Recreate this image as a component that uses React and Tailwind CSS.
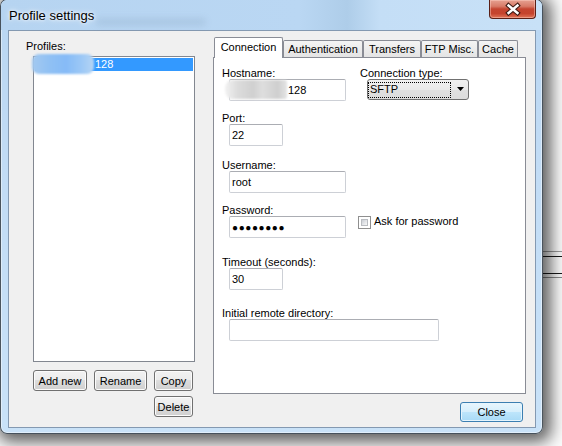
import React from "react";

function Btn({ className, children }) {
  return (
    <div
      className={
        "h-[21px] rounded-[3px] border border-[#707070] bg-[linear-gradient(to_bottom,#f2f2f2_0%,#ebebeb_50%,#dddddd_50%,#cfcfcf_100%)] shadow-[inset_0_0_0_1px_#fbfbfb] flex items-center justify-center " +
        className
      }
    >
      {children}
    </div>
  );
}

function TextBox({ className, children }) {
  return (
    <div
      className={
        "h-[22px] rounded-[2px] border border-[#cdd0d6] border-t-[#abadb3] bg-white flex items-center pl-[2px] leading-[13px] " +
        className
      }
    >
      {children}
    </div>
  );
}

export default function App() {
  return (
    <div className="relative w-[562px] h-[446px] overflow-hidden bg-[#fbfbfb] [font-family:'Liberation_Sans',Arial,sans-serif] text-[11px] leading-[12px] text-black">
      {/* background application lines visible at the right */}
      <div className="absolute left-[520px] top-[251px] w-[42px] h-px bg-[#9a9a9a]" />
      <div className="absolute left-[520px] top-[256px] w-[42px] h-px bg-[#1a1a1a]" />
      <div className="absolute left-[520px] top-[273px] w-[42px] h-px bg-[#1a1a1a]" />
      <div className="absolute left-[520px] top-[277px] w-[42px] h-px bg-[#8a8a8a]" />

      {/* window */}
      <div className="absolute left-0 top-[-1px] w-[543px] h-[435px] rounded-[7px] border border-[rgba(0,0,0,0.62)] bg-[linear-gradient(to_bottom,#b9d6f2_0%,#c2dcf5_40%,#c9e2f8_100%)] shadow-[3px_3px_16px_5px_rgba(0,0,0,0.62),inset_0_0_0_1px_rgba(255,255,255,0.45)] flex flex-col">
        {/* title bar */}
        <div className="relative h-[30px] flex justify-between rounded-t-[6px] bg-[linear-gradient(to_right,#b6d4f1_0%,#bad7f3_55%,#aecde9_64%,#c4def6_70%,#c8e1f7_100%)]">
          <div className="absolute left-[95px] top-[18px] w-[110px] h-[8px] rounded-full bg-[rgba(90,120,150,0.14)] blur-[3px]" />
          <div className="relative pl-[8px] pt-[8px] text-[13px] leading-[16px] [text-shadow:0_0_6px_#ffffff,0_0_3px_#ffffff]">
            Profile settings
          </div>
          <div className="relative mr-[6px] w-[47px] h-[19px] rounded-b-[4px] border border-t-0 border-[#5a1f16] bg-[linear-gradient(to_bottom,#e6a191_0%,#d87b68_35%,#c4442f_50%,#c5432d_75%,#e07458_100%)] shadow-[inset_0_0_0_1px_rgba(255,210,200,0.45)]">
            <svg width="45" height="19" className="absolute left-0 top-0">
              <path d="M18.5 5.5 L27.5 13 M27.5 5.5 L18.5 13" stroke="#3d1a14" strokeWidth="4.6" strokeLinecap="square" fill="none" />
              <path d="M18.5 5.5 L27.5 13 M27.5 5.5 L18.5 13" stroke="#ffffff" strokeWidth="2.4" strokeLinecap="square" fill="none" />
            </svg>
          </div>
        </div>

        {/* client area */}
        <div className="ml-[7px] mr-[6px] mb-[5px] flex-1 border border-[#8499b1] bg-[#f0f0f0] flex">
          {/* left column */}
          <div className="w-[186px] shrink-0 pl-[17px] pt-[9px] flex flex-col">
            <div>Profiles:</div>
            <div className="relative mt-[4px] ml-[7px] w-[162px] h-[306px] border border-[#828790] bg-white p-px">
              <div className="h-[13px] bg-[#3399ff] text-white pl-[60px] leading-[13px]">128</div>
              <div className="absolute left-[-2px] top-[-3px] w-[62px] h-[20px] rounded-[7px] bg-[linear-gradient(to_right,#a3c9f0_0%,#8fc0f4_30%,#86bbf7_55%,#9cc8f6_80%,#b5d5f4_100%)] blur-[1px]" />
            </div>
            <div className="mt-[8px] ml-[7px] flex gap-[7px]">
              <Btn className="w-[54px]">Add new</Btn>
              <Btn className="w-[53px]">Rename</Btn>
              <Btn className="w-[39px]">Copy</Btn>
            </div>
            <div className="mt-[5px] ml-[128px]">
              <Btn className="w-[39px]">Delete</Btn>
            </div>
          </div>

          {/* right column */}
          <div className="ml-[18px] pt-[6px] w-[313px] flex flex-col">
            <div className="flex items-end h-[20px] pl-px">
              <div className="relative z-10 -mb-px h-[21px] w-[69px] border border-b-0 border-[#898c95] bg-white rounded-t-[2px] flex justify-center pt-[3px]">
                Connection
              </div>
              <div className="h-[17px] w-[80px] border border-b-0 border-[#898c95] bg-[linear-gradient(to_bottom,#f4f4f4,#e4e4e4)] rounded-t-[2px] flex justify-center pt-[2px]">
                Authentication
              </div>
              <div className="h-[17px] w-[58px] border border-b-0 border-[#898c95] bg-[linear-gradient(to_bottom,#f4f4f4,#e4e4e4)] rounded-t-[2px] flex justify-center pt-[2px]">
                Transfers
              </div>
              <div className="h-[17px] w-[57px] border border-b-0 border-[#898c95] bg-[linear-gradient(to_bottom,#f4f4f4,#e4e4e4)] rounded-t-[2px] flex justify-center pt-[2px]">
                FTP Misc.
              </div>
              <div className="h-[17px] w-[40px] border border-b-0 border-[#898c95] bg-[linear-gradient(to_bottom,#f4f4f4,#e4e4e4)] rounded-t-[2px] flex justify-center pt-[2px]">
                Cache
              </div>
            </div>

            <div className="h-[337px] border border-[#898c95] bg-white pl-[8px] pt-[9px] flex flex-col">
              {/* hostname / connection type */}
              <div className="flex">
                <div className="w-[138px]">
                  <div>Hostname:</div>
                  <div className="relative ml-[7px] w-[117px]">
                    <TextBox className="w-[117px] pl-[58px]">128</TextBox>
                    <div className="absolute left-[-4px] top-[1px] w-[62px] h-[19px] rounded-l-[8px] rounded-r-[2px] bg-[linear-gradient(to_right,#f2f2f2_0%,#dcdcdc_20%,#d0d0d0_45%,#dedede_60%,#cfcfcf_85%,#e4e4e4_100%)] blur-[1px]" />
                  </div>
                </div>
                <div>
                  <div>Connection type:</div>
                  <div className="ml-[7px] w-[102px] h-[21px] rounded-[3px] border border-[#707070] bg-[linear-gradient(to_bottom,#f0f0f0_0%,#e9e9e9_50%,#e0e0e0_50%,#dcdcdc_100%)] flex items-center">
                    <div className="w-[83px] h-[16px] border border-dotted border-black flex items-center pl-px leading-[13px]">
                      SFTP
                    </div>
                    <svg width="9" height="5" className="ml-[6px]">
                      <path d="M0 0 H7 L3.5 4 Z" fill="#000" />
                    </svg>
                  </div>
                </div>
              </div>

              {/* port */}
              <div className="mt-[11px]">Port:</div>
              <TextBox className="ml-[7px] w-[54px]">22</TextBox>

              {/* username */}
              <div className="mt-[13px]">Username:</div>
              <TextBox className="ml-[7px] w-[117px] border-[#8fbbe6] border-t-[#6fa4da]">root</TextBox>

              {/* password */}
              <div className="mt-[11px]">Password:</div>
              <div className="flex items-start">
                <TextBox className="ml-[7px] w-[117px] tracking-[0.6px] text-[10px]">●●●●●●●●</TextBox>
                <div className="ml-[12px] w-[13px] h-[13px] border border-[#8f8f8f] bg-white p-[2px]">
                  <div className="w-full h-full bg-[linear-gradient(135deg,#c9cdd3_0%,#e6e8eb_60%,#f7f7f7_100%)] border border-[#b9bcc1]" />
                </div>
                <div className="ml-[3px] -mt-px leading-[13px]">Ask for password</div>
              </div>

              {/* timeout */}
              <div className="mt-[18px]">Timeout (seconds):</div>
              <TextBox className="ml-[7px] w-[54px]">30</TextBox>

              {/* initial remote directory */}
              <div className="mt-[17px]">Initial remote directory:</div>
              <TextBox className="ml-[7px] w-[210px]"></TextBox>
            </div>

            <div className="mt-[8px] self-end mr-[3px] w-[63px] h-[20px] rounded-[3px] border border-[#3c7fb1] bg-[linear-gradient(to_bottom,#e8f6fd_0%,#d6effc_48%,#bde5fb_52%,#a8daf6_100%)] shadow-[inset_0_0_0_1px_#e6f5fd] flex items-center justify-center">
              Close
            </div>
          </div>
        </div>
      </div>
    </div>
  );
}
